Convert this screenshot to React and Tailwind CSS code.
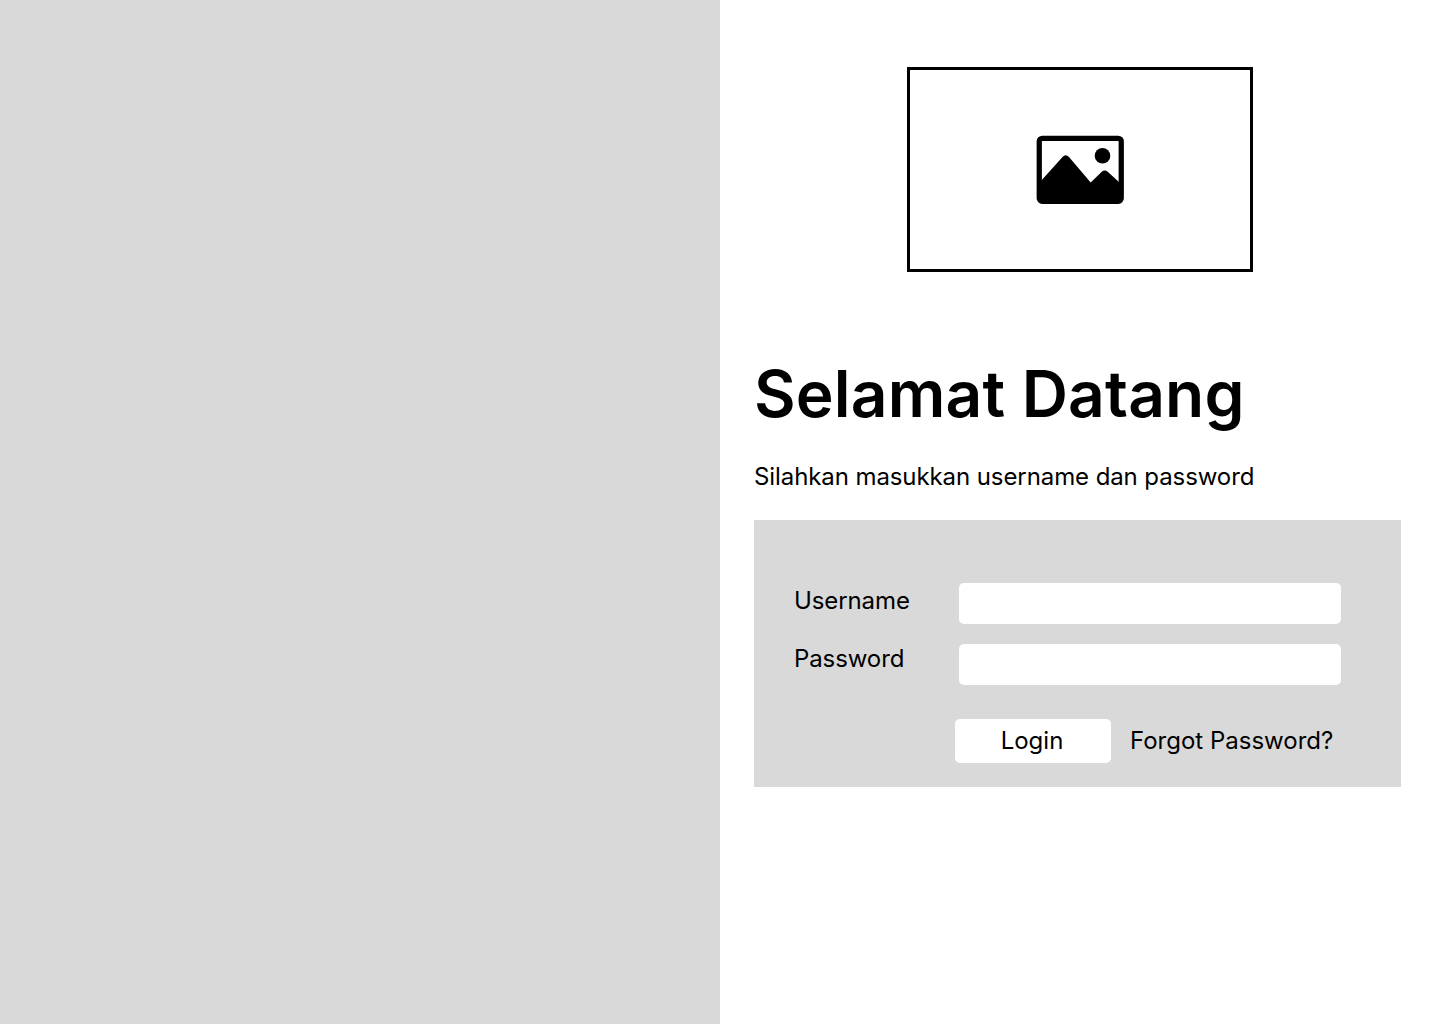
function ImageIcon() {
  return (
    <svg className="h-[69px] w-[88px]" viewBox="0 0 88 69" fill="none">
      <rect x="3.25" y="3.25" width="82" height="63" rx="3" stroke="black" strokeWidth="5.25" />
      <circle cx="66.5" cy="20.800" r="7.800" fill="black" />
      <path d="M4 47 L26.500 22 Q29.500 18.500 33 22 L54.700 47.500 L65.500 37 Q68.700 34.200 72 37 L84 48 V66 H4 Z" fill="black" />
    </svg>
  );
}

export default function App() {
  return (
    <div className="flex h-[1024px] w-[1440px] bg-white font-['Inter',sans-serif] text-2xl leading-[29px] text-black">
      <div className="w-[720px] bg-[#d9d9d9]" />
      <main className="flex w-[720px] flex-col pl-[34px] pr-[39px] pt-[67px]">
        <div className="ml-[153px] flex h-[205px] w-[346px] items-center justify-center border-3 border-black">
          <ImageIcon />
        </div>
        <h1 className="mt-[83px] text-[64px] font-semibold leading-[77px] tracking-[0.2px]">Selamat Datang</h1>
        <p className="mt-[30px] tracking-[-0.09px]">Silahkan masukkan username dan password</p>
        <form className="mt-[29px] h-[267px] w-[647px] bg-[#d9d9d9] pl-10 pt-[63px]">
          <div className="flex h-[41px]">
            <label htmlFor="username" className="mt-[3px] w-[165px] tracking-[-0.1px]">Username</label>
            <input id="username" className="h-[41px] w-[382px] rounded-[5px] bg-white px-3" />
          </div>
          <div className="mt-5 flex h-[41px]">
            <label htmlFor="password" className="w-[165px] tracking-[-0.1px]">Password</label>
            <input id="password" type="password" className="h-[41px] w-[382px] rounded-[5px] bg-white px-3" />
          </div>
          <div className="ml-[161px] mt-[34px] flex h-11 items-center">
            <button type="button" className="h-11 w-[156px] rounded-[5px] bg-white pb-[2px] pr-[2px]">Login</button>
            <a href="#" className="ml-[19px] pb-[2px]">Forgot Password?</a>
          </div>
        </form>
      </main>
    </div>
  );
}
